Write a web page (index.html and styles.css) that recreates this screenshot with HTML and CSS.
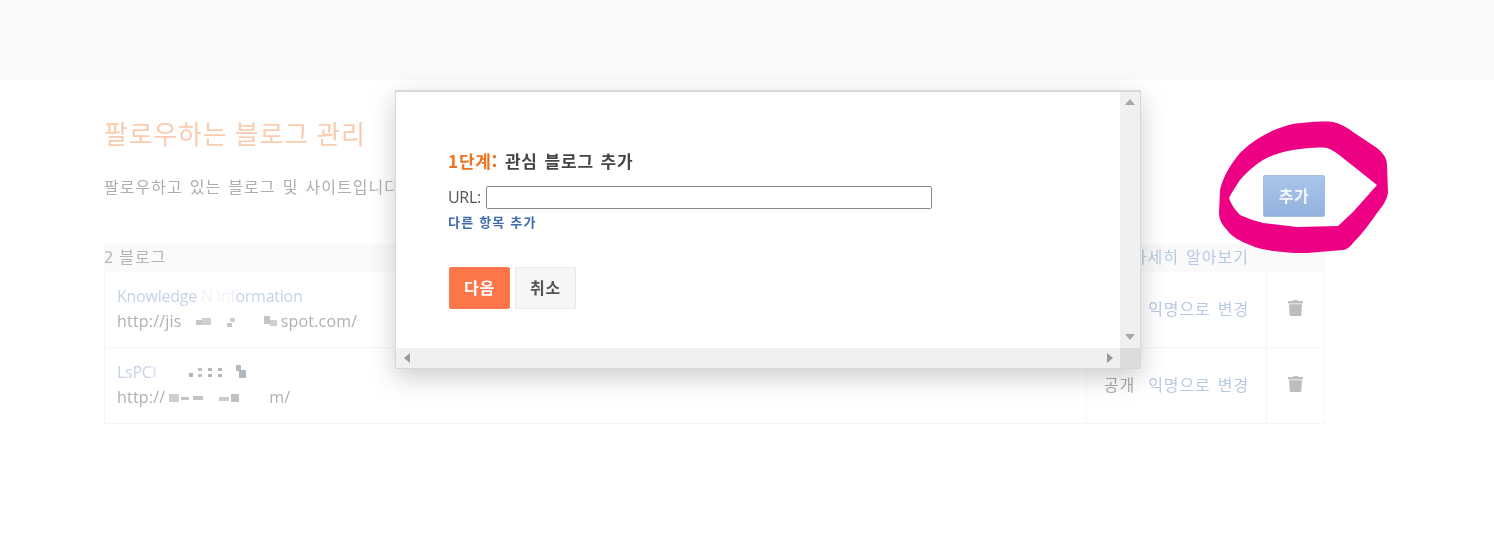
FILE: index.html
```html
<!DOCTYPE html>
<html lang="ko">
<head>
<meta charset="utf-8">
<title>팔로우하는 블로그 관리</title>
<link rel="stylesheet" href="styles.css">
</head>
<body>
<div class="page">
  <div class="topband"></div>
  <main class="main">
    <h1 class="title">팔로우하는 블로그 관리</h1>
    <div class="intro">
      <p class="desc">팔로우하고 있는 블로그 및 사이트입니다</p>
      <button class="add-btn" type="button">추가</button>
    </div>
    <div class="table">
      <div class="thead">
        <span class="count">2 블로그</span>
        <a class="more">자세히 알아보기</a>
      </div>
      <div class="row">
        <div class="cell-main">
          <div class="name">Knowledge <span class="faint">N Inf</span>ormation</div>
          <div class="url">http://jis<svg class="mosaic" width="99" height="12" viewBox="0 0 99 12"><rect x="14" y="4" width="6" height="5" fill="#c6c6c6"/><rect x="20" y="2" width="9" height="7" fill="#d0d0d0"/><rect x="48" y="2" width="5" height="4" fill="#d0d0d0"/><rect x="45" y="7" width="5" height="4" fill="#c6c6c6"/><rect x="82" y="0" width="6" height="8" fill="#c4c4c4"/><rect x="88" y="4" width="7" height="6" fill="#cfcfcf"/></svg>spot.com/</div>
        </div>
        <div class="cell-status"><span class="status">공개</span><a class="anon">익명으로 변경</a></div>
        <div class="cell-del">
          <svg class="trash" width="15" height="16" viewBox="0 0 15 16"><path d="M5 1 5.600 0h3.800L10 1h4.200c.4 0 .8.400.8.800V3.500H0V1.800C0 1.400.4 1 .8 1z"/><path d="M1 4.300h13l-.6 10.500c0 .7-.5 1.200-1.200 1.200H2.800c-.7 0-1.200-.5-1.200-1.200z"/></svg>
        </div>
      </div>
      <div class="row">
        <div class="cell-main">
          <div class="name">LsPC<svg class="mosaic" width="95" height="14" viewBox="0 0 95 14"><rect x="1" y="2" width="3" height="10" fill="#e6ebf3"/><rect x="37" y="8" width="4" height="4" fill="#b4b4b4"/><rect x="46" y="3" width="4" height="3" fill="#c0c0c0"/><rect x="46" y="9" width="4" height="3" fill="#c0c0c0"/><rect x="56" y="3" width="4" height="3" fill="#b4b4b4"/><rect x="56" y="9" width="4" height="3" fill="#b4b4b4"/><rect x="66" y="3" width="4" height="3" fill="#b4b4b4"/><rect x="66" y="9" width="4" height="3" fill="#b4b4b4"/><rect x="84" y="0" width="5" height="6" fill="#b8b8b8"/><rect x="87" y="5" width="7" height="8" fill="#b0b6c0"/></svg></div>
          <div class="url">http://<svg class="mosaic" width="104" height="12" viewBox="0 0 104 12"><rect x="4" y="2" width="10" height="8" fill="#cfcfcf"/><rect x="16" y="5" width="8" height="3" fill="#c4c4c4"/><rect x="28" y="4" width="10" height="4" fill="#c4c4c4"/><rect x="54" y="5" width="10" height="4" fill="#cccccc"/><rect x="66" y="2" width="8" height="8" fill="#c0c0c0"/></svg>m/</div>
        </div>
        <div class="cell-status"><span class="status">공개</span><a class="anon">익명으로 변경</a></div>
        <div class="cell-del">
          <svg class="trash" width="15" height="16" viewBox="0 0 15 16"><path d="M5 1 5.600 0h3.800L10 1h4.200c.4 0 .8.400.8.800V3.500H0V1.800C0 1.400.4 1 .8 1z"/><path d="M1 4.300h13l-.6 10.500c0 .7-.5 1.200-1.200 1.200H2.800c-.7 0-1.200-.5-1.200-1.200z"/></svg>
        </div>
      </div>
    </div>
  </main>

  <svg class="scribble" width="1494" height="544" viewBox="0 0 1494 544">
    <path fill-rule="evenodd" d="M1220 190C1223 177 1230 165 1240 153C1252 141 1268 130 1293 124C1310 122 1322 121 1333 122C1341 124 1348 128 1353 132L1377 148C1383 153 1387 158 1387 165L1388 193C1387 200 1382 207 1377 213C1370 223 1362 234 1353 243C1350 247 1346 250 1343 250L1307 253C1298 253 1290 253 1283 252C1270 251 1258 249 1250 245C1240 241 1232 237 1227 230C1222 225 1219 219 1219 213Z M1229 198C1232 192 1236 186 1240 180C1248 171 1255 165 1263 160C1272 155 1282 152 1293 150C1306 148 1318 147 1327 148C1333 150 1338 154 1343 158L1377 185L1353 212L1338 226L1297 227L1263 223C1255 221 1247 218 1240 215C1235 210 1231 204 1229 198Z"/>
  </svg>

  <section class="dialog">
    <div class="dialog-view">
      <div class="dialog-body">
        <h2 class="step"><span class="step-no">1단계:</span> 관심 블로그 추가</h2>
        <label class="url-row">URL: <input class="url-input" type="text"></label>
        <a class="add-more">다른 항목 추가</a>
        <div class="actions">
          <button class="btn-next" type="button">다음</button>
          <button class="btn-cancel" type="button">취소</button>
        </div>
      </div>
      <div class="vbar">
        <svg width="10" height="6" viewBox="0 0 10 6"><path d="M5 0l5 6H0z"/></svg>
        <svg width="10" height="6" viewBox="0 0 10 6"><path d="M0 0h10L5 6z"/></svg>
      </div>
    </div>
    <div class="hbar">
      <div class="htrack">
        <svg width="6" height="10" viewBox="0 0 6 10"><path d="M6 0v10L0 5z"/></svg>
        <svg width="6" height="10" viewBox="0 0 6 10"><path d="M0 0l6 5-6 5z"/></svg>
      </div>
      <div class="corner"></div>
    </div>
  </section>
</div>
</body>
</html>
```
FILE: styles.css
```css
* { box-sizing: border-box; }
html, body { margin: 0; padding: 0; background: #fff; }
body {
  font-family: "Open Sans", "Noto Sans CJK KR", sans-serif;
  overflow: hidden;
}
.page {
  position: relative;
  width: 1494px;
  height: 544px;
  overflow: hidden;
  filter: blur(0.55px);
}
.topband { height: 80px; background: #fafafa; }
.main { padding: 0 169px 0 104px; }
.title {
  margin: 34px 0 0;
  height: 40px;
  font-size: 26px;
  line-height: 40px;
  font-weight: 400;
  letter-spacing: 0.75px;
  color: #f9ccb0;
}
.intro {
  display: flex;
  justify-content: space-between;
  align-items: flex-start;
  height: 69px;
  margin-top: 21px;
}
.desc {
  margin: 0;
  font-size: 16px;
  line-height: 24px;
  letter-spacing: 1px;
  word-spacing: 2px;
  color: #aeaeae;
  white-space: nowrap;
}
.add-btn {
  width: 62px;
  height: 42px;
  border: 1px solid #a4bfe4;
  border-radius: 2px;
  background: linear-gradient(#aac5ea, #92b2de);
  color: #f4f7fc;
  font: bold 16px/38px "Noto Sans CJK KR", sans-serif;
  letter-spacing: 0.6px;
  padding: 0 0 2px;
}
.table { border: 1px solid #f6f6f6; border-top: 0; }
.thead {
  display: flex;
  justify-content: space-between;
  height: 28px;
  padding-right: 76px;
  margin-left: -1px;
  margin-right: -1px;
  background: #fafafa;
  font-size: 16px;
  line-height: 26px;
  color: #b4b4b4;
}
.count { letter-spacing: 1px; }
.more { color: #b6c9e4; letter-spacing: 1px; word-spacing: 2px; }
.row {
  display: flex;
  height: 75.500px;
  border-bottom: 1px solid #f6f6f6;
}
.row:last-child { border-bottom: 0; }
.cell-main { flex: 1; padding: 12px 0 0 12px; }
.name {
  height: 25px;
  font-size: 16px;
  line-height: 25px;
  letter-spacing: -0.25px;
  color: #c4d3e9;
  white-space: nowrap;
}
.faint { color: #eef2f8; }
.url {
  height: 25px;
  font-size: 16px;
  line-height: 25px;
  letter-spacing: 0.2px;
  color: #b0b0b0;
  white-space: nowrap;
}
.mosaic { vertical-align: -1px; }
.cell-status {
  display: flex;
  align-items: center;
  gap: 13px;
  width: 180px;
  padding: 0 0 3px 17px;
  border-left: 1px solid #f6f6f6;
  font-size: 16px;
  letter-spacing: 0.9px;
  word-spacing: 2px;
  white-space: nowrap;
}
.status { color: #a8a8a8; }
.anon { color: #b6c9e4; }
.cell-del {
  display: flex;
  align-items: center;
  justify-content: center;
  width: 58px;
  padding-bottom: 2px;
  border-left: 1px solid #f6f6f6;
}
.trash { fill: #bdbdbd; }
.scribble { position: absolute; left: 0; top: 0; }
.scribble path { fill: #ee0084; }
.dialog {
  position: absolute;
  left: 395px;
  top: 90px;
  width: 746px;
  height: 279px;
  display: flex;
  flex-direction: column;
  background: #fff;
  border: 1px solid #d8d8d8;
  border-top-width: 2px;
  box-shadow: 0 8px 24px rgba(0, 0, 0, 0.2);
}
.dialog-view { flex: 1; display: flex; min-height: 0; }
.dialog-body { flex: 1; padding: 57px 0 0 52px; }
.step {
  margin: 0;
  font: bold 17px/24px "Noto Sans CJK KR", sans-serif;
  letter-spacing: 0.85px;
  word-spacing: 1px;
  color: #454545;
}
.step-no { color: #f0711c; }
.url-row {
  display: flex;
  align-items: center;
  gap: 5px;
  height: 24px;
  margin-top: 12px;
  font-size: 16px;
  letter-spacing: -0.3px;
  color: #555;
}
.url-input {
  width: 446px;
  height: 23px;
  padding: 0;
  border: 1px solid #8a8a8a;
  border-radius: 2px;
  background: #fff;
}
.add-more {
  display: block;
  margin-top: 3px;
  font: bold 13px/20px "Noto Sans CJK KR", sans-serif;
  letter-spacing: 1.2px;
  color: #3f6ca8;
}
.actions { display: flex; gap: 5px; margin: 35px 0 0 1px; }
.btn-next, .btn-cancel {
  width: 61px;
  height: 42px;
  padding: 0 0 3px;
  border-radius: 2px;
  font: bold 16px "Noto Sans CJK KR", sans-serif;
  letter-spacing: 0.8px;
}
.btn-next { border: 1px solid #fb7a4e; background: #fc7649; color: #fff; }
.btn-cancel { border: 1px solid #e8e8e8; background: #f6f6f6; color: #555; }
.vbar {
  display: flex;
  flex-direction: column;
  align-items: center;
  justify-content: space-between;
  width: 20px;
  padding: 7px 0 8px;
  background: #f0f0f0;
  fill: #a6a6a6;
}
.hbar { display: flex; height: 20px; }
.htrack {
  flex: 1;
  display: flex;
  align-items: center;
  justify-content: space-between;
  padding: 0 7px 0 8px;
  background: #f0f0f0;
  fill: #9a9a9a;
}
.corner { width: 20px; background: #dcdcdc; }
```
